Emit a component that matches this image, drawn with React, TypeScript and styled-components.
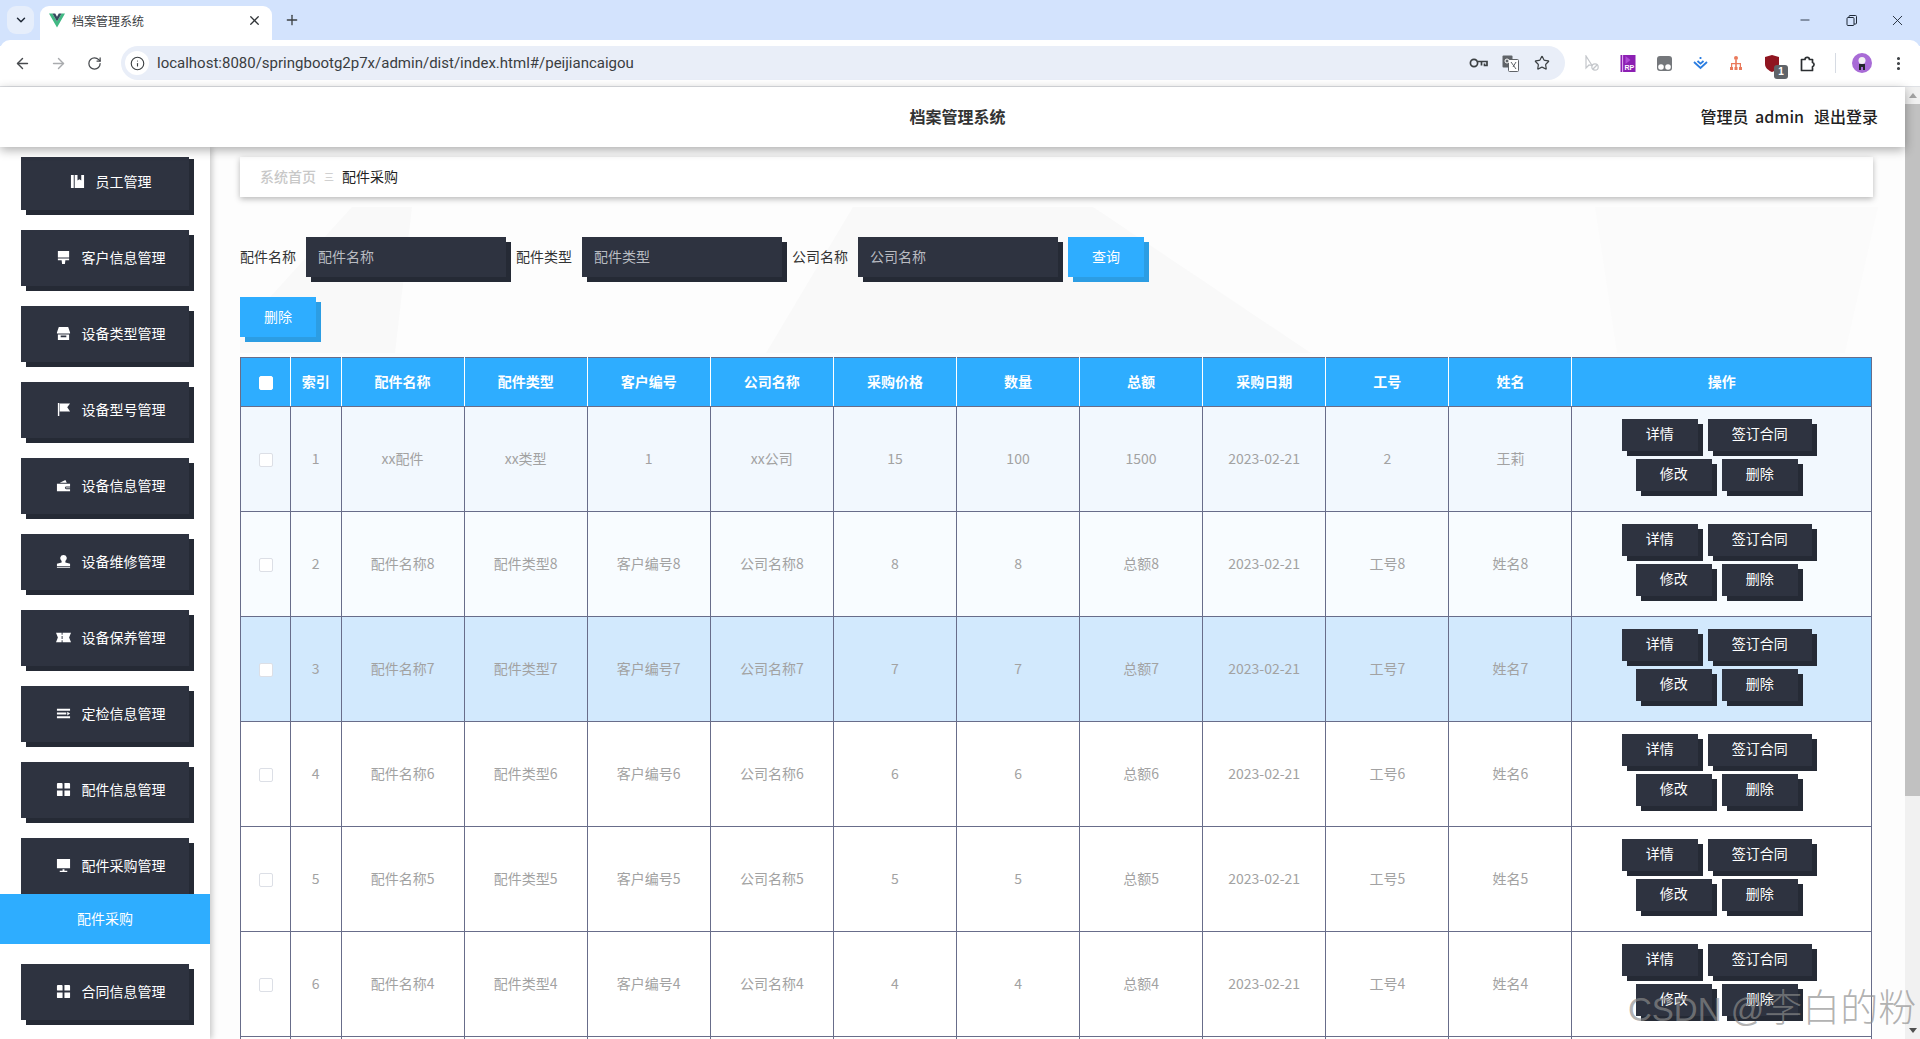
import React from 'react';
import styled, { createGlobalStyle } from 'styled-components';
import { ArrowLeft, ArrowRight, ChevronDown, EllipsisVertical, Info, Minus, Plus, RotateCw, Star, X } from 'lucide-react';

const Global = createGlobalStyle`
  html, body { margin: 0; padding: 0; height: 100%; overflow: hidden; }
  body { font-family: "Noto Sans CJK SC", "Liberation Sans", sans-serif; }
  * { box-sizing: border-box; }
`;

const Shell = styled.div`
  position: relative;
  width: 1920px;
  height: 1039px;
  display: flex;
  flex-direction: column;
  overflow: hidden;
`;

/* browser chrome */
const TabStrip = styled.div`
  height: 46px;
  margin-bottom: -6px;
  background: #d3e3fd;
  display: flex;
  align-items: flex-start;
  padding: 6px 0 0 7px;
  flex: none;
`;
const TabMenu = styled.div`
  width: 27px;
  height: 28px;
  border-radius: 9px;
  background: #e6eefb;
  color: #1f2937;
  display: flex;
  align-items: center;
  justify-content: center;
  margin-right: 6px;
`;
const Tab = styled.div`
  width: 232px;
  height: 34px;
  background: #fff;
  border-radius: 9px 9px 0 0;
  display: flex;
  align-items: center;
  padding: 0 10px 6px 9px;
  color: #303437;
`;
const TabTitle = styled.span`
  font-size: 12px;
  margin-left: 7px;
  flex: 1;
  color: #3c4043;
`;
const NewTab = styled.div`
  width: 40px;
  height: 28px;
  display: flex;
  align-items: center;
  justify-content: center;
  color: #3c4043;
`;
const StripSpace = styled.div`flex: 1;`;
const WinBtn = styled.div`
  width: 46px;
  height: 28px;
  display: flex;
  align-items: center;
  justify-content: center;
  color: #1f2937;
`;
const Toolbar = styled.div`
  position: relative;
  height: 47px;
  flex: none;
  background: #fff;
  border-bottom: 1px solid #dfe1e5;
  border-radius: 10px 10px 0 0;
  display: flex;
  align-items: center;
  padding: 0 4px;
`;
const ToolIcon = styled.div<{ $muted?: boolean }>`
  width: 36px;
  height: 34px;
  flex: none;
  display: flex;
  align-items: center;
  justify-content: center;
  position: relative;
  color: ${p => (p.$muted ? '#a9abae' : '#474a4e')};
`;
const Omnibox = styled.div`
  flex: 1;
  height: 34px;
  margin-left: 9px;
  margin-right: 9px;
  border-radius: 17px;
  background: #e9eef8;
  display: flex;
  align-items: center;
  padding: 0 7px 0 4px;
`;
const InfoChip = styled.div`
  width: 24px;
  height: 24px;
  border-radius: 50%;
  background: #fff;
  color: #3c4043;
  display: flex;
  align-items: center;
  justify-content: center;
  margin-right: 8px;
`;
const Url = styled.div`
  flex: 1;
  font-family: Roboto, "Liberation Sans", sans-serif;
  font-size: 15px;
  color: #3a3d41;
`;
const OmniIcon = styled.div`
  width: 32px;
  height: 26px;
  display: flex;
  align-items: center;
  justify-content: center;
  color: #3c4043;
`;
const ToolDivider = styled.div`
  width: 1px;
  height: 20px;
  background: #d6dbe3;
  margin: 0 8px 0 9px;
  flex: none;
`;
const UBadge = styled.span`
  position: absolute;
  left: 20px;
  top: 19px;
  width: 14px;
  height: 14px;
  border-radius: 3px;
  background: #5f6368;
  color: #fff;
  font: 700 10px/14px "Liberation Sans", sans-serif;
  text-align: center;
`;

/* page */
const Page = styled.div`
  flex: 1;
  min-height: 0;
  display: flex;
`;
const PageBody = styled.div`
  flex: 1;
  min-width: 0;
  display: flex;
  flex-direction: column;
`;
const Header = styled.header`
  position: relative;
  z-index: 3;
  height: 60px;
  flex: none;
  background: #fff;
  box-shadow: 0 3px 10px rgba(0, 0, 0, 0.32);
  display: grid;
  grid-template-columns: 1fr auto 1fr;
  align-items: center;
  padding: 0 27px 3px 37px;
`;
const AppTitle = styled.div`
  grid-column: 2;
  font-size: 16px;
  font-weight: 700;
  color: #333;
`;
const HeaderUser = styled.div`
  justify-self: end;
  font-size: 16px;
  font-weight: 500;
  word-spacing: 3px;
  color: #222;
  display: flex;
  gap: 10px;
`;
const Body = styled.div`
  flex: 1;
  min-height: 0;
  display: flex;
`;
const Sidebar = styled.aside`
  position: relative;
  z-index: 2;
  width: 210px;
  flex: none;
  background: #fff;
  box-shadow: 2px 0 6px rgba(0, 0, 0, 0.22);
  padding-top: 10px;
  display: flex;
  flex-direction: column;
`;
const MenuList = styled.div`
  flex: 1;
  overflow: hidden;
  display: flex;
  flex-direction: column;
`;
const MenuItem = styled.div<{ $first?: boolean; $flush?: boolean }>`
  width: 168px;
  height: 56px;
  flex: none;
  margin: ${p => (p.$first ? '-3px' : '0')} 0 ${p => (p.$flush ? '0' : '20px')} 21px;
  background: #2e3340;
  box-shadow: 5px 5px 0 #252a35;
  color: #fff;
  font-size: 14px;
  display: flex;
  align-items: center;
  justify-content: center;
  gap: 11px;
  padding: 0 0 2px 11px;
`;
const SubItem = styled.div`
  position: relative;
  height: 50px;
  flex: none;
  margin-bottom: 20px;
  background: #2eadff;
  color: #fff;
  font-size: 14px;
  display: flex;
  align-items: center;
  justify-content: center;
  padding-bottom: 2px;
`;
const Main = styled.main`
  position: relative;
  flex: 1;
  min-width: 0;
  overflow: hidden;
  background: #fdfdfd;
  padding: 10px 32px 0 30px;
`;
const Backdrop = styled.svg`
  position: absolute;
  left: 0;
  top: 0;
  width: 100%;
  height: 100%;
`;
const Foreground = styled.div`
  position: relative;
`;
const Crumbs = styled.nav`
  height: 40px;
  background: #fff;
  box-shadow: 0 2px 6px rgba(0, 0, 0, 0.28);
  display: flex;
  align-items: center;
  padding: 0 0 2px 20px;
  font-size: 14px;
`;
const CrumbRoot = styled.span`
  color: #c8c8c8;
  font-weight: 500;
`;
const CrumbSep = styled.span`
  color: #c8c8c8;
  font-size: 10px;
  margin: 0 8px;
`;
const CrumbCurrent = styled.span`
  color: #222;
`;
const FilterRow = styled.div`
  margin-top: 40px;
  display: flex;
  align-items: center;
`;
const FilterLabel = styled.label`
  width: 56px;
  font-size: 14px;
  color: #333;
  margin: 0 10px 2px 0;
  white-space: nowrap;
`;
const FilterInput = styled.input`
  width: 200px;
  height: 40px;
  border: 0;
  outline: 0;
  border-radius: 0;
  background: #2e3340;
  box-shadow: 5px 5px 0 #252a35;
  padding: 0 12px 2px;
  margin-right: 10px;
  color: #fff;
  font: 14px "Noto Sans CJK SC", sans-serif;
  &::placeholder { color: #b9bcc2; opacity: 1; }
`;
const BlueButton = styled.button`
  width: 76px;
  height: 40px;
  border: 0;
  border-radius: 0;
  padding: 0 0 2px;
  background: #2eadff;
  box-shadow: 5px 5px 0 #2c9de3;
  color: #fff;
  font: 14px "Noto Sans CJK SC", sans-serif;
`;
const ActionRow = styled.div`
  margin-top: 20px;
`;
const Table = styled.table`
  margin-top: 20px;
  width: 1632px;
  table-layout: fixed;
  border-collapse: collapse;
  border: 1px solid #686d8a;
  font-size: 14px;
`;
const Th = styled.th`
  height: 49px;
  padding: 0 0 2px;
  background: #2eadff;
  color: #fff;
  font-weight: 700;
  border: 1px solid #fff;
  border-top-color: #686d8a;
  border-bottom-color: #686d8a;
  text-align: center;
  &:first-child { border-left-color: #686d8a; }
  &:last-child { border-right-color: #686d8a; }
`;
const Tr = styled.tr<{ $bg: string }>`
  background: ${p => p.$bg};
`;
const Td = styled.td`
  height: 105px;
  padding: 0 0 2px;
  color: #a2a2a2;
  border: 1px solid #686d8a;
  text-align: center;
  vertical-align: middle;
`;
const Check = styled.span<{ $solid?: boolean }>`
  display: inline-block;
  width: 14px;
  height: 14px;
  vertical-align: middle;
  border-radius: 2px;
  background: #fff;
  border: 1px solid ${p => (p.$solid ? '#fff' : '#dcdfe6')};
`;
const RowActions = styled.div`
  display: flex;
  flex-wrap: wrap;
  justify-content: center;
  row-gap: 8px;
  padding: 0 10px 7px;
`;
const RowButton = styled.button<{ $wide?: boolean }>`
  width: ${p => (p.$wide ? '104px' : '76px')};
  height: 32px;
  margin-right: 10px;
  border: 0;
  border-radius: 0;
  padding: 0 0 3px;
  background: #2e3340;
  box-shadow: 5px 5px 0 #252a35;
  color: #fff;
  font: 14px "Noto Sans CJK SC", sans-serif;
`;
const ScrollTrack = styled.div`
  width: 15px;
  flex: none;
  background: #f1f1f1;
  display: flex;
  flex-direction: column;
  align-items: center;
`;
const ScrollArrow = styled.div<{ $down?: boolean }>`
  width: 15px;
  height: 17px;
  flex: none;
  display: flex;
  align-items: center;
  justify-content: center;
  &::before {
    content: '';
    border-left: 4px solid transparent;
    border-right: 4px solid transparent;
    ${p => (p.$down ? 'border-top: 5px solid #505050;' : 'border-bottom: 5px solid #a3a3a3;')}
  }
`;
const ScrollThumb = styled.div`
  width: 15px;
  height: 692px;
  flex: none;
  background: #c1c1c1;
`;
const ScrollSpace = styled.div`flex: 1;`;
const Watermark = styled.div`
  position: absolute;
  left: 1628px;
  top: 982px;
  font-family: "Liberation Sans", "Noto Sans CJK SC", sans-serif;
  font-size: 38px;
  font-weight: 300;
  line-height: 52px;
  color: rgba(140, 140, 140, 0.68);
  white-space: nowrap;
  z-index: 5;
`;
const WatermarkLatin = styled.span`
  font-size: 33px;
`;

const MenuGlyph: React.FC<{ d: string }> = ({ d }) => (
  <svg width="15" height="15" viewBox="0 0 16 16" fill="#fff" fillRule="evenodd" style={{ flex: 'none' }}>
    <path d={d} />
  </svg>
);

const GRID = 'M1 2a1 1 0 0 1 1-1h4a1 1 0 0 1 1 1v5H2a1 1 0 0 1-1-1z M9 1h5a1 1 0 0 1 1 1v5H9z M1 9h6v6H2a1 1 0 0 1-1-1z M9 9h6v5a1 1 0 0 1-1 1H9z';

const menus = [
  { t: '员工管理', d: 'M1 1h3v14H1z M5 1h3v6l2-1.5L12 7V1h3v14H5z' },
  { t: '客户信息管理', d: 'M2 1h12v7H2z M2 9h12v2h-4l-.5 4h-3L6 11H2z' },
  { t: '设备类型管理', d: 'M3 1h10l2 6v1H1V7z M2 9h12v6H2z M5 10h6v2H5z' },
  { t: '设备型号管理', d: 'M2 1h1.5v14H2z M4 1.5h11l-3 4 3 4.5H4z' },
  { t: '设备信息管理', d: 'M1 6h14v3h-4a1.5 1.5 0 0 0 0 3h4v2H1z M4 5l6-3 1.5 3z M10.5 10h4.5v1h-4.5z' },
  { t: '设备维修管理', d: 'M8 1a3.5 3.5 0 0 1 2 6.4V9l5 1.5V13H1v-2.5L6 9V7.4A3.5 3.5 0 0 1 8 1z M1 14h14v1H1z' },
  { t: '设备保养管理', d: 'M0 3h6v2h1V3h9l-2 5 2 5H7v-2H6v2H0l2-5z M6 6.5h1v3H6z' },
  { t: '定检信息管理', d: 'M1 3h14v2H1z M1 7h10v2H1z M1 11h14v2H1z M12 6l3 2-3 2z' },
  { t: '配件信息管理', d: GRID },
  { t: '配件采购管理', d: 'M1 1h14v10H1z M7 12h2v1.5h3V15H4v-1.5h3z', flush: true },
];

const cols = ['配件名称', '配件类型', '客户编号', '公司名称', '采购价格', '数量', '总额', '采购日期', '工号', '姓名'];

const makeRow = (n: number) => [`配件名称${n}`, `配件类型${n}`, `客户编号${n}`, `公司名称${n}`, `${n}`, `${n}`, `总额${n}`, '2023-02-21', `工号${n}`, `姓名${n}`];
const rows = [
  { bg: '#f2f8fe', cells: ['xx配件', 'xx类型', '1', 'xx公司', '15', '100', '1500', '2023-02-21', '2', '王莉'] },
  { bg: '#f8fcff', cells: makeRow(8) },
  { bg: '#d2e9fd', cells: makeRow(7) },
  { bg: '#ffffff', cells: makeRow(6) },
  { bg: '#ffffff', cells: makeRow(5) },
  { bg: '#ffffff', cells: makeRow(4) },
  { bg: '#ffffff', cells: makeRow(3) },
];

export default function App() {
  return (
    <Shell>
      <Global />
      <TabStrip>
        <TabMenu><ChevronDown size={14} strokeWidth={2.5} /></TabMenu>
        <Tab>
          <svg width="16" height="15" viewBox="0 0 16 14"><path d="M0 0h3.4L8 8 12.600 0H16L8 14z" fill="#41b883" /><path d="M3.4 0h2.800L8 3.200 9.800 0h2.800L8 8z" fill="#35495e" /></svg>
          <TabTitle>档案管理系统</TabTitle>
          <X size={15} strokeWidth={2} />
        </Tab>
        <NewTab><Plus size={16} strokeWidth={2} /></NewTab>
        <StripSpace />
        <WinBtn><Minus size={14} strokeWidth={1.5} /></WinBtn>
        <WinBtn>
          <svg width="11" height="11" viewBox="0 0 11 11" fill="none" stroke="#1f2937"><rect x="1" y="2.500" width="7" height="8" rx="1" /><path d="M3 2.500V1.500a1 1 0 0 1 1-1h5.500a1 1 0 0 1 1 1V8a1 1 0 0 1-1 1H8" /></svg>
        </WinBtn>
        <WinBtn><X size={17} strokeWidth={1.3} /></WinBtn>
      </TabStrip>
      <Toolbar>
        <ToolIcon><ArrowLeft size={17} strokeWidth={2} /></ToolIcon>
        <ToolIcon $muted><ArrowRight size={17} strokeWidth={2} /></ToolIcon>
        <ToolIcon><RotateCw size={15} strokeWidth={2} /></ToolIcon>
        <Omnibox>
          <InfoChip><Info size={15} strokeWidth={1.8} /></InfoChip>
          <Url>localhost:8080/springbootg2p7x/admin/dist/index.html#/peijiancaigou</Url>
          <OmniIcon>
            <svg width="19" height="12" viewBox="0 0 19 12" fill="none" stroke="#3c4043" strokeWidth="1.7"><circle cx="5" cy="6" r="3.600" /><path d="M9 4.500h9v4h-2.500V6.500M12.500 4.500v4" /></svg>
          </OmniIcon>
          <OmniIcon>
            <svg width="17" height="17" viewBox="0 0 17 17"><rect x="0.500" y="0.500" width="10" height="12" rx="1" fill="#5f6368" /><rect x="6.500" y="4.500" width="10" height="12" rx="1" fill="#fff" stroke="#5f6368" /><path d="M9 7l5 7M14 7l-3 5" stroke="#5f6368" /><circle cx="5" cy="6" r="2" fill="none" stroke="#fff" /></svg>
          </OmniIcon>
          <OmniIcon><Star size={16} strokeWidth={1.8} /></OmniIcon>
        </Omnibox>
        <ToolIcon>
          <svg width="14" height="17" viewBox="0 0 14 17" fill="none" stroke="#c4c7cb" strokeWidth="1.200"><path d="M1 1v12l3-3 3 .5z" /><circle cx="10" cy="12" r="3.200" /><path d="M8 14l4-4" /></svg>
        </ToolIcon>
        <ToolIcon>
          <svg width="16" height="17" viewBox="0 0 15 17"><rect width="15" height="17" fill="#8c1fb3" /><rect x="1.600" width="1" height="17" fill="#e7b8f5" /><path d="M5 1l5 4-5 4z" fill="#b04bd6" /><text x="4" y="15" fontSize="7" fontWeight="700" fill="#fff" fontFamily="Liberation Sans">RP</text></svg>
        </ToolIcon>
        <ToolIcon>
          <svg width="15" height="15" viewBox="0 0 15 15"><rect width="15" height="15" rx="3" fill="#74777b" /><circle cx="4" cy="11" r="2.800" fill="#fff" /><circle cx="11" cy="11" r="2.800" fill="#fff" /></svg>
        </ToolIcon>
        <ToolIcon>
          <svg width="15" height="13" viewBox="0 0 15 13" fill="none" stroke="#2a7de1" strokeWidth="1.800"><path d="M1 5l6.500 6L14 5" /><path d="M4.500 4l3 2.600 3-2.600" /><path d="M7.500 0v2" /></svg>
        </ToolIcon>
        <ToolIcon>
          <svg width="12" height="14" viewBox="0 0 12 14" fill="#ea7a5c"><circle cx="6" cy="2" r="2" /><path d="M5.200 4h1.600v3H11v4H9.800V8.200H6.800V11H5.200V8.200H2.200V11H1V7h4.200z" /><rect y="11" width="3" height="3" /><rect x="4.500" y="11" width="3" height="3" /><rect x="9" y="11" width="3" height="3" /></svg>
        </ToolIcon>
        <ToolIcon>
          <svg width="14" height="17" viewBox="0 0 14 17"><path d="M7 0l7 2v7c0 4-3.500 6.500-7 8-3.500-1.500-7-4-7-8V2z" fill="#8f1520" /></svg>
          <UBadge>1</UBadge>
        </ToolIcon>
        <ToolIcon>
          <svg width="16" height="17" viewBox="0 0 16 17" fill="none" stroke="#2b2e31" strokeWidth="1.700" strokeLinejoin="round"><path d="M1.500 4.500h3.500a2.200 2.200 0 0 1 4.400 0h3.100v3a2.200 2.200 0 0 1 0 4.200v3.800h-11z" /></svg>
        </ToolIcon>
        <ToolDivider />
        <ToolIcon>
          <svg width="20" height="20" viewBox="0 0 20 20"><circle cx="10" cy="10" r="10" fill="#a86bd6" /><circle cx="10" cy="7.500" r="3.500" fill="#f2f2f2" /><path d="M7 11h6v6h-2v-3H9v3H7z" fill="#23262b" /></svg>
        </ToolIcon>
        <ToolIcon><EllipsisVertical size={17} strokeWidth={2.4} color="#3c4043" /></ToolIcon>
      </Toolbar>
      <Page>
        <PageBody>
          <Header>
            <AppTitle>档案管理系统</AppTitle>
            <HeaderUser><span>管理员 admin</span><span>退出登录</span></HeaderUser>
          </Header>
          <Body>
            <Sidebar>
              <MenuList>
                {menus.map((m, i) => (
                  <MenuItem key={m.t} $first={i === 0} $flush={m.flush}>
                    <MenuGlyph d={m.d} />
                    <span>{m.t}</span>
                  </MenuItem>
                ))}
                <SubItem>配件采购</SubItem>
                <MenuItem><MenuGlyph d={GRID} /><span>合同信息管理</span></MenuItem>
              </MenuList>
            </Sidebar>
            <Main>
              <Backdrop aria-hidden="true">
                <path d="M30 183L142 60h60l-17 146H30z" fill="#f9f9f9" />
                <path d="M643 60h240l218 146H556z" fill="#f9f9f9" />
                <path d="M1385 60h283l-33 146h-228z" fill="#fbfbfb" />
              </Backdrop>
              <Foreground>
                <Crumbs>
                  <CrumbRoot>系统首页</CrumbRoot>
                  <CrumbSep>三</CrumbSep>
                  <CrumbCurrent>配件采购</CrumbCurrent>
                </Crumbs>
                <FilterRow>
                  <FilterLabel>配件名称</FilterLabel>
                  <FilterInput placeholder="配件名称" readOnly />
                  <FilterLabel>配件类型</FilterLabel>
                  <FilterInput placeholder="配件类型" readOnly />
                  <FilterLabel>公司名称</FilterLabel>
                  <FilterInput placeholder="公司名称" readOnly />
                  <BlueButton>查询</BlueButton>
                </FilterRow>
                <ActionRow><BlueButton>删除</BlueButton></ActionRow>
                <Table>
                  <colgroup>
                    <col style={{ width: 50 }} />
                    <col style={{ width: 50.5 }} />
                    {cols.map(c => <col key={c} style={{ width: 123.1 }} />)}
                    <col />
                  </colgroup>
                  <thead>
                    <tr>
                      <Th><Check $solid /></Th>
                      <Th>索引</Th>
                      {cols.map(c => <Th key={c}>{c}</Th>)}
                      <Th>操作</Th>
                    </tr>
                  </thead>
                  <tbody>
                    {rows.map((r, i) => (
                      <Tr key={i} $bg={r.bg}>
                        <Td><Check /></Td>
                        <Td>{i + 1}</Td>
                        {r.cells.map((c, j) => <Td key={j}>{c}</Td>)}
                        <Td>
                          <RowActions>
                            <RowButton>详情</RowButton>
                            <RowButton $wide>签订合同</RowButton>
                            <RowButton>修改</RowButton>
                            <RowButton>删除</RowButton>
                          </RowActions>
                        </Td>
                      </Tr>
                    ))}
                  </tbody>
                </Table>
              </Foreground>
            </Main>
          </Body>
        </PageBody>
        <ScrollTrack>
          <ScrollArrow />
          <ScrollThumb />
          <ScrollSpace />
          <ScrollArrow $down />
        </ScrollTrack>
      </Page>
      <Watermark><WatermarkLatin>CSDN @</WatermarkLatin>李白的粉</Watermark>
    </Shell>
  );
}
